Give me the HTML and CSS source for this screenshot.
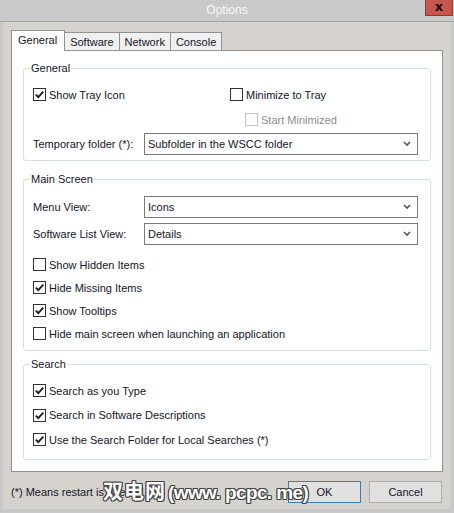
FILE: index.html
```html
<!DOCTYPE html>
<html>
<head>
<meta charset="utf-8">
<link rel="stylesheet" href="styles.css">
</head>
<body>
<div class="window">
  <div class="titlebar">
    <span></span>
    <span class="title">Options</span>
    <span class="close-wrap"><span class="close">x</span></span>
  </div>
  <div class="client">
    <div class="tabs">
      <div class="tab active">General</div>
      <div class="tab">Software</div>
      <div class="tab">Network</div>
      <div class="tab">Console</div>
    </div>
    <div class="panel">
      <div class="group g-general">
        <span class="legend">General</span>
        <div class="two-col">
          <label class="check"><span class="box on"><svg viewBox="0 0 11 11" width="11" height="11"><path d="M1.8 5.6 L4.3 8.1 L9.3 2.6" /></svg></span>Show Tray Icon</label>
          <div class="col">
            <label class="check"><span class="box"></span>Minimize to Tray</label>
            <label class="check disabled indent"><span class="box"></span>Start Minimized</label>
          </div>
        </div>
        <div class="field">
          <span class="flabel">Temporary folder (*):</span>
          <div class="select"><span>Subfolder in the WSCC folder</span><svg class="chev" viewBox="0 0 8 6" width="8" height="6"><path d="M1 1 L4 4 L7 1" /></svg></div>
        </div>
      </div>

      <div class="group g-main">
        <span class="legend">Main Screen</span>
        <div class="fields">
          <div class="field">
            <span class="flabel">Menu View:</span>
            <div class="select"><span>Icons</span><svg class="chev" viewBox="0 0 8 6" width="8" height="6"><path d="M1 1 L4 4 L7 1" /></svg></div>
          </div>
          <div class="field">
            <span class="flabel">Software List View:</span>
            <div class="select"><span>Details</span><svg class="chev" viewBox="0 0 8 6" width="8" height="6"><path d="M1 1 L4 4 L7 1" /></svg></div>
          </div>
        </div>
        <div class="checks">
          <label class="check"><span class="box"></span>Show Hidden Items</label>
          <label class="check"><span class="box on"><svg viewBox="0 0 11 11" width="11" height="11"><path d="M1.8 5.6 L4.3 8.1 L9.3 2.6" /></svg></span>Hide Missing Items</label>
          <label class="check"><span class="box on"><svg viewBox="0 0 11 11" width="11" height="11"><path d="M1.8 5.6 L4.3 8.1 L9.3 2.6" /></svg></span>Show Tooltips</label>
          <label class="check"><span class="box"></span>Hide main screen when launching an application</label>
        </div>
      </div>

      <div class="group g-search">
        <span class="legend">Search</span>
        <div class="checks search">
          <label class="check"><span class="box on"><svg viewBox="0 0 11 11" width="11" height="11"><path d="M1.8 5.6 L4.3 8.1 L9.3 2.6" /></svg></span>Search as you Type</label>
          <label class="check"><span class="box on"><svg viewBox="0 0 11 11" width="11" height="11"><path d="M1.8 5.6 L4.3 8.1 L9.3 2.6" /></svg></span>Search in Software Descriptions</label>
          <label class="check"><span class="box on"><svg viewBox="0 0 11 11" width="11" height="11"><path d="M1.8 5.6 L4.3 8.1 L9.3 2.6" /></svg></span>Use the Search Folder for Local Searches (*)</label>
        </div>
      </div>
    </div>
    <div class="footer">
      <span class="note">(*) Means restart is needed</span>
      <div class="buttons">
        <button class="btn default">OK</button>
        <button class="btn">Cancel</button>
      </div>
    </div>
  </div>
  <div class="watermark"><span class="wm-cjk">双电网</span><span class="wm-lat">(www. pcpc. me)</span></div>
</div>
</body>
</html>
```
FILE: styles.css
```css
* { box-sizing: border-box; }
html, body { margin: 0; padding: 0; }
body {
  width: 454px;
  height: 513px;
  overflow: hidden;
  font-family: "Liberation Sans", Arial, sans-serif;
  font-size: 11px;
  color: #141428;
}
.window {
  position: relative;
  width: 454px;
  height: 513px;
  background: #c9c9c9;
  padding: 0 4px 4px 3px;
  display: flex;
  flex-direction: column;
}
.titlebar {
  height: 22px;
  margin: 0 -4px 0 -3px;
  border-bottom: 1px solid #a8a8a8;
  display: grid;
  grid-template-columns: 1fr auto 1fr;
  align-items: start;
}
.title {
  color: #f7f7f7;
  font-size: 12px;
  line-height: 21px;
}
.close-wrap {
  display: flex;
  justify-content: flex-end;
  padding-right: 1px;
}
.close {
  width: 28px;
  height: 16px;
  background: #c7574c;
  border: 1px solid #8c3a33;
  border-top: none;
  color: #1a0b0a;
  font-weight: bold;
  font-size: 13px;
  line-height: 13px;
  text-align: center;
  font-family: "DejaVu Sans", sans-serif;
}
.client {
  flex: 1;
  background: #d6d3ce;
  padding: 8px 7px 0 8px;
  display: flex;
  flex-direction: column;
}
.tabs {
  display: flex;
  align-items: flex-end;
  height: 20px;
}
.tab {
  height: 18px;
  border: 1px solid #8f9195;
  border-bottom: none;
  background: #f0f0f0;
  padding: 0 5px;
  line-height: 18px;
  margin-left: -1px;
  color: #141428;
}
.tab.active {
  position: relative;
  z-index: 1;
  height: 21px;
  margin-bottom: -1px;
  margin-left: 0;
  background: #fff;
  padding: 0 7px 0 6px;
  line-height: 19px;
}
.panel {
  height: 422px;
  background: #fff;
  border: 1px solid #8f9195;
  padding: 17px 11px 0 11px;
  display: flex;
  flex-direction: column;
}
.group {
  position: relative;
  border: 1px solid #d8dde1;
  border-radius: 3px;
  padding: 0 12px 0 9px;
}
.legend {
  position: absolute;
  top: -7px;
  left: 6px;
  background: #fff;
  padding: 0 1px;
  line-height: 13px;
}
.g-general { padding-top: 17px; padding-bottom: 5px; height: 93px; }
.g-main { margin-top: 18px; padding-top: 16px; height: 172px; }
.g-search { margin-top: 13px; padding-top: 17px; height: 96px; }
.two-col {
  display: grid;
  grid-template-columns: 197px 1fr;
  align-items: start;
}
.col { display: flex; flex-direction: column; gap: 8px; }
.check {
  display: flex;
  align-items: center;
  gap: 3px;
  height: 17px;
  white-space: nowrap;
}
.box {
  width: 13px;
  height: 13px;
  border: 1px solid #333;
  background: #fff;
  display: flex;
  align-items: center;
  justify-content: center;
  flex: none;
}
.box svg path {
  fill: none;
  stroke: #1e1e1e;
  stroke-width: 2;
}
.check.disabled { color: #8d8d8d; }
.check.disabled .box { border-color: #c3c3c3; }
.indent { margin-left: 15px; }
.field {
  display: grid;
  grid-template-columns: 111px 1fr;
  align-items: center;
  margin-top: 5px;
}
.fields .field:first-child { margin-top: 0; }
.select {
  height: 22px;
  border: 1px solid #7a7a7a;
  background: #fff;
  display: flex;
  align-items: center;
  justify-content: space-between;
  padding: 0 6px 0 3px;
}
.chev path {
  fill: none;
  stroke: #555;
  stroke-width: 1.6;
}
.checks {
  display: flex;
  flex-direction: column;
  gap: 6px;
  margin-top: 11px;
}
.checks.search { margin-top: 0; gap: 7.5px; }
.footer {
  display: flex;
  justify-content: space-between;
  align-items: center;
  padding-top: 9px;
  padding-right: 1px;
}
.buttons { display: flex; gap: 8px; }
.btn {
  width: 73px;
  height: 22px;
  background: #e1e1e1;
  border: 1px solid #adadad;
  font-family: "Liberation Sans", Arial, sans-serif;
  font-size: 11px;
  color: #141428;
  padding: 0;
}
.btn.default { border-color: #3c7fb1; }
.watermark {
  position: absolute;
  left: 103px;
  top: 476px;
  display: flex;
  align-items: baseline;
  color: #fff;
  white-space: nowrap;
  text-shadow: -1px -1px 0 #444, 1px -1px 0 #444, -1px 1px 0 #444, 1px 1px 0 #444, 0 1px 0 #444, 1px 0 0 #444, -1px 0 0 #444, 0 -1px 0 #444;
  pointer-events: none;
}
.wm-cjk {
  font-family: "Noto Sans CJK SC", sans-serif;
  font-size: 20px;
  font-weight: bold;
  letter-spacing: 1px;
}
.wm-lat {
  font-family: "Liberation Sans", Arial, sans-serif;
  font-size: 19px;
  font-weight: bold;
  letter-spacing: -0.6px;
  margin-left: 2px;
}
```
